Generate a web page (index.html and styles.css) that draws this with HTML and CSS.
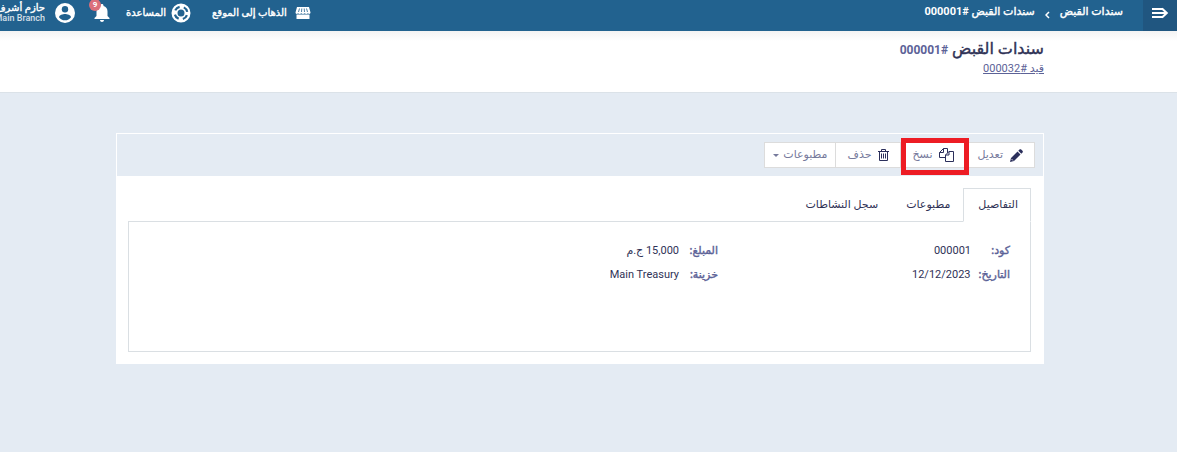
FILE: index.html
```html
<!DOCTYPE html>
<html lang="ar" dir="rtl">
  <head>
    <meta charset="UTF-8" />
    <title>سندات القبض #000001</title>
    <link rel="stylesheet" href="styles.css">
  </head>
  <body>
    <header class="navbar">
      <button class="menu-toggle" type="button" aria-label="القائمة">
        <svg width="18" height="12" viewBox="0 0 18 12" fill="none" stroke="#fff" stroke-width="2">
          <path d="M1 2h10.500M1 6h15M1 10h10.500M11 1.500L15.800 6 11 10.500" />
        </svg>
      </button>
      <nav class="breadcrumb">
        <a href="#">سندات القبض</a>
        <svg class="chevron" width="5" height="8" viewBox="0 0 5 8" fill="none" stroke="#fff" stroke-width="1.500"><path d="M4 1L1 4l3 3" /></svg>
        <a href="#">سندات القبض <span class="number">#<bdi>000001</bdi></span></a>
      </nav>
      <nav class="top-links">
        <a class="site-link" href="#">
          <svg width="16" height="14" viewBox="0 0 16 14" fill="#fff">
            <path d="M2 1h12l1.500 5.500C15.500 8 14 8.300 13 7.300c-1 1-2.500 1-3.300 0-1 1-2.500 1-3.400 0-1 1-2.400 1-3.300 0C2 8.300.5 8 .5 6.500z" />
            <path d="M1.500 8.500h13V13h-13z" />
            <path d="M4.500 2.500L3.500 6M6.800 2.500l-.3 3.500M9.200 2.500l.3 3.500M11.500 2.500l1 3.500" stroke="#22628f" stroke-width=".8" />
          </svg>
          <span>الذهاب إلى الموقع</span>
        </a>
        <a class="help-link" href="#">
          <svg width="20" height="20" viewBox="0 0 20 20" fill="none">
            <circle cx="10" cy="10" r="6.500" stroke="#fff" stroke-width="6" />
            <circle cx="10" cy="10" r="6.300" stroke="#22628f" stroke-width="2.200" stroke-dasharray="5.500 4.396" stroke-dashoffset="-2.200" />
          </svg>
          <span>المساعدة</span>
        </a>
        <a class="bell" href="#" aria-label="الإشعارات">
          <svg width="16" height="18" viewBox="0 0 16 18" fill="#fff">
            <path d="M8 0c.9 0 1.500.6 1.500 1.500v.6c2.600.7 4 2.800 4 5.400v4.500L15.500 14v1H.5v-1l2-2V7.500c0-2.600 1.400-4.700 4-5.400v-.6C6.500.6 7.100 0 8 0zM6 16h4c0 1.200-.9 2-2 2s-2-.8-2-2z" />
          </svg>
          <span class="badge">9</span>
        </a>
        <a class="user" href="#">
          <svg width="20" height="20" viewBox="0 0 20 20">
            <circle cx="10" cy="10" r="10" fill="#fff" />
            <circle cx="10" cy="6.200" r="3.200" fill="#22628f" />
            <path d="M4 14.200c0-2 4-3.100 6-3.100s6 1.100 6 3.100C14.700 16.200 12.500 17.300 10 17.300S5.300 16.200 4 14.200z" fill="#22628f" />
          </svg>
          <span class="user-text">
            <span class="user-name">حازم أشرف</span>
            <span class="user-branch">Main Branch</span>
          </span>
        </a>
      </nav>
    </header>

    <section class="page-head">
      <h1>سندات القبض <span class="number">#<bdi>000001</bdi></span></h1>
      <a href="#">قيد #<bdi>000032</bdi></a>
    </section>

    <main class="card">
      <div class="toolbar">
        <button class="btn" type="button">
          <svg width="13" height="13" viewBox="0 0 13 13" fill="#2b2f5b">
            <path d="M0 13l1-4 6.500-6.500 3 3L4 12zM8.300 1.700L9.500.5c.5-.5 1.200-.5 1.700 0l1.300 1.300c.5.5.5 1.200 0 1.700l-1.200 1.200z" />
            <path d="M1.500 10l1.500 1.500" stroke="#fff" stroke-width=".8" />
          </svg>
          تعديل
        </button>
        <button class="btn marked" type="button">
          <svg width="15" height="14" viewBox="0 0 15 14" fill="#fff" stroke="#2b2f5b" stroke-linejoin="round">
            <path d="M4.500.5h4v9h-8v-5zM4.500.5v4h-4" />
            <path d="M10 3.500h4.500v10h-8V7zM10 3.500V7H6.500" />
          </svg>
          نسخ
        </button>
        <button class="btn" type="button">
          <svg width="11" height="12" viewBox="0 0 11 12" fill="none" stroke="#2b2f5b">
            <path d="M0 2.500h11M3.500 2.500v-2h4v2M1.500 2.500v9h8v-9M3.500 4.500v5M5.500 4.500v5M7.500 4.500v5" />
          </svg>
          حذف
        </button>
        <button class="btn dropdown" type="button">مطبوعات<span class="caret"></span></button>
      </div>

      <div class="card-body">
        <nav class="tabs">
          <a class="tab active" href="#">التفاصيل</a>
          <a class="tab" href="#">مطبوعات</a>
          <a class="tab" href="#">سجل النشاطات</a>
        </nav>
        <div class="panel">
          <dl class="details">
            <div><dt>كود:</dt><dd>000001</dd></div>
            <div><dt>التاريخ:</dt><dd>12/12/2023</dd></div>
          </dl>
          <dl class="details">
            <div><dt>المبلغ:</dt><dd>15,000 ج.م</dd></div>
            <div><dt>خزينة:</dt><dd>Main Treasury</dd></div>
          </dl>
        </div>
      </div>
    </main>
  </body>
</html>
```

FILE: styles.css
```css
:root {
  font-family: Roboto, "DejaVu Sans", sans-serif;
  font-size: 11px;
  --bar: #22628f;
  --bg: #e4ebf3;
  --line: #dadfe3;
  --label: #5c6297;
  --dark: #2f3256;
}
* {
  box-sizing: border-box;
}
body {
  margin: 0;
  background: var(--bg);
  color: var(--dark);
  line-height: 16px;
}
a {
  color: inherit;
  text-decoration: none;
}
svg {
  flex: none;
}
h1,
dl,
dd {
  margin: 0;
}
/* the Arabic bold is too wide at these sizes, thicken the regular instead */
.breadcrumb,
.top-links,
.page-head h1,
.details dt {
  font-weight: 500;
  -webkit-text-stroke: 0.4px;
}
.number,
.badge,
.user-branch {
  -webkit-text-stroke: 0;
}
.navbar {
  display: flex;
  height: 31px;
  background: var(--bar);
  color: #fff;
  overflow: hidden;
}
.menu-toggle {
  display: flex;
  align-items: center;
  justify-content: center;
  width: 34px;
  padding: 0 0 5px;
  border: 0;
  background: #205680;
}
.breadcrumb {
  display: flex;
  gap: 10px;
  padding: 4px 20px 0 0;
}
.number {
  font-weight: 700;
}
.chevron {
  margin-top: 7px;
}
.top-links {
  display: flex;
  align-items: center;
  margin-right: auto;
  padding-bottom: 5px;
  font-size: 10px;
}
.top-links a {
  display: flex;
  align-items: center;
  flex: none;
}
.site-link {
  gap: 8px;
}
.help-link {
  gap: 5px;
  margin-right: 21px;
}
.bell {
  position: relative;
  margin-right: 16px;
}
.badge {
  position: absolute;
  top: -5px;
  right: 9px;
  width: 12px;
  height: 12px;
  border-radius: 50%;
  background: #dc6f7b;
  font-size: 8px;
  font-weight: 700;
  line-height: 12px;
  text-align: center;
}
.user {
  gap: 10px;
  margin-right: 19px;
}
.user-text {
  display: flex;
  flex-direction: column;
  width: 45px;
  line-height: 11px;
  white-space: nowrap;
}
.user-branch {
  font-size: 9px;
  opacity: 0.8;
}
.page-head {
  height: 62px;
  padding: 8px 133px 0 116px;
  border-bottom: 1px solid #dbe2e8;
  background: linear-gradient(#f3f3f3, #fff 10px);
}
.page-head h1 {
  font-size: 16px;
  line-height: 20px;
}
.page-head .number {
  color: var(--label);
  font-size: 12px;
}
.page-head a {
  display: block;
  width: fit-content;
  color: var(--label);
  line-height: 18px;
  text-decoration: underline;
}
.card {
  margin: 40px 133px 0 116px;
  border: 1px solid #fff;
  background: #fff;
}
.toolbar {
  display: flex;
  padding: 8px;
  background: var(--bg);
}
.btn {
  display: flex;
  align-items: center;
  gap: 7px;
  height: 26px;
  padding: 0 11px;
  border: 1px solid #dcdcdc;
  background: #fff;
  color: #767a9c;
  font: inherit;
}
.btn + .btn {
  margin-right: -1px;
}
/* red frame round the copy button */
.marked {
  position: relative;
}
.marked::after {
  content: "";
  position: absolute;
  inset: -5px -4px -8px 0;
  border: 5px solid #ed1c24;
}
.dropdown {
  gap: 4px;
  padding: 0 8px;
}
.caret {
  border: 3px solid transparent;
  border-top-color: #767a9c;
  border-bottom: 0;
}
.card-body {
  padding: 12px 12px 11px 11px;
}
.tabs {
  display: flex;
}
.tab {
  height: 34px;
  padding: 8px 12px 8px 14px;
  border: 1px solid transparent;
  line-height: 16px;
}
.tab.active {
  position: relative;
  z-index: 1;
  border-color: var(--line);
  border-bottom-color: #fff;
  background: #fff;
}
.panel {
  display: grid;
  grid-template-columns: repeat(3, 1fr);
  min-height: 131px;
  margin-top: -1px;
  padding: 17px 20px 17px 5px;
  border: 1px solid var(--line);
}
.details div {
  display: flex;
  line-height: 24px;
}
.details dt {
  min-width: 39px;
  padding-left: 8px;
  color: var(--label);
}
```
